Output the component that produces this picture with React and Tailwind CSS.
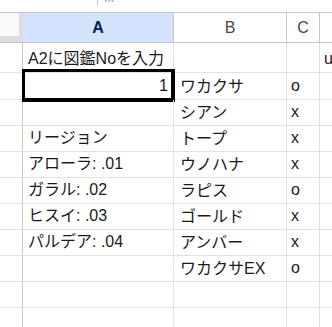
import React from "react";

const rows = [
  { h: "h-[30px]", a: "A2に図鑑Noを入力", b: "", c: "", d: "u" },
  { h: "h-[27px]", a: "1", b: "ワカクサ", c: "o", sel: true },
  { h: "h-[26px]", a: "", b: "シアン", c: "x" },
  { h: "h-[26px]", a: "リージョン", b: "トープ", c: "x" },
  { h: "h-[26px]", a: "アローラ: .01", b: "ウノハナ", c: "x" },
  { h: "h-[26px]", a: "ガラル: .02", b: "ラピス", c: "o" },
  { h: "h-[26px]", a: "ヒスイ: .03", b: "ゴールド", c: "x" },
  { h: "h-[26px]", a: "パルデア: .04", b: "アンバー", c: "x" },
  { h: "h-[26px]", a: "", b: "ワカクサEX", c: "o" },
  { h: "h-[26px]", a: "", b: "", c: "" },
  { h: "h-[26px]", a: "", b: "", c: "" },
];

export default function App() {
  return (
    <div
      className="w-[332px] h-[327px] overflow-hidden bg-white text-[#1f1f1f]"
      style={{ fontFamily: '"Liberation Sans", Arial, "Noto Sans CJK JP", sans-serif' }}
    >
      {/* top strip */}
      <div className="h-[13px] border-b border-[#c7c7c7] flex overflow-hidden">
        <div className="w-[97px]" />
        <div className="w-px h-[6px] bg-[#c7c7c7]" />
        <div className="ml-[6px] -mt-[9px] text-[13px] text-[#9aa0a6] leading-none">fx</div>
      </div>
      {/* column header */}
      <div className="flex h-[30px] border-b border-[#c4c7c5] text-[16px]">
        <div className="w-[23px] shrink-0 bg-[#f8f9fa] border-r-4 border-b-[6px] border-[#dadce0] box-border" />
        <div className="w-[151px] shrink-0 bg-[#d3e3fd] border-r border-[#c4c7c5] flex items-center justify-center font-bold text-[#041e49]">
          A
        </div>
        <div className="w-[113px] shrink-0 border-r border-[#c4c7c5] flex items-center justify-center text-[#444746]">
          B
        </div>
        <div className="w-[33px] shrink-0 border-r border-[#c4c7c5] flex items-center justify-center text-[#444746]">
          C
        </div>
        <div className="flex-1" />
      </div>
      {rows.map((r, i) => (
        <div key={i} className={`flex ${r.h} border-b border-[#e1e1e1] text-[16px] leading-none text-[#1a1a1a]`}>
          <div className="w-[23px] shrink-0 border-r border-[#c4c7c5]" />
          <div
            className={`relative w-[151px] shrink-0 border-r border-[#e1e1e1] flex items-end pb-[5px] whitespace-nowrap ${
              r.sel ? "justify-end pr-[5px] pl-[5px]" : "px-[5px]"
            }`}
          >
            {r.a}
            {r.sel && (
              <div className="absolute -left-px -top-[4px] -right-[2px] -bottom-[3px] border-t-[3px] border-l-[3px] border-r-4 border-b-4 border-black" />
            )}
          </div>
          <div className="w-[113px] shrink-0 border-r border-[#e1e1e1] flex items-end pb-[4px] px-[6px] whitespace-nowrap">
            {r.b}
          </div>
          <div className="w-[33px] shrink-0 border-r border-[#e1e1e1] flex items-end pb-[5px] px-[4px]">
            {r.c}
          </div>
          <div className="flex-1 flex items-end pb-[5px] px-[4px]">{r.d || ""}</div>
        </div>
      ))}
    </div>
  );
}
